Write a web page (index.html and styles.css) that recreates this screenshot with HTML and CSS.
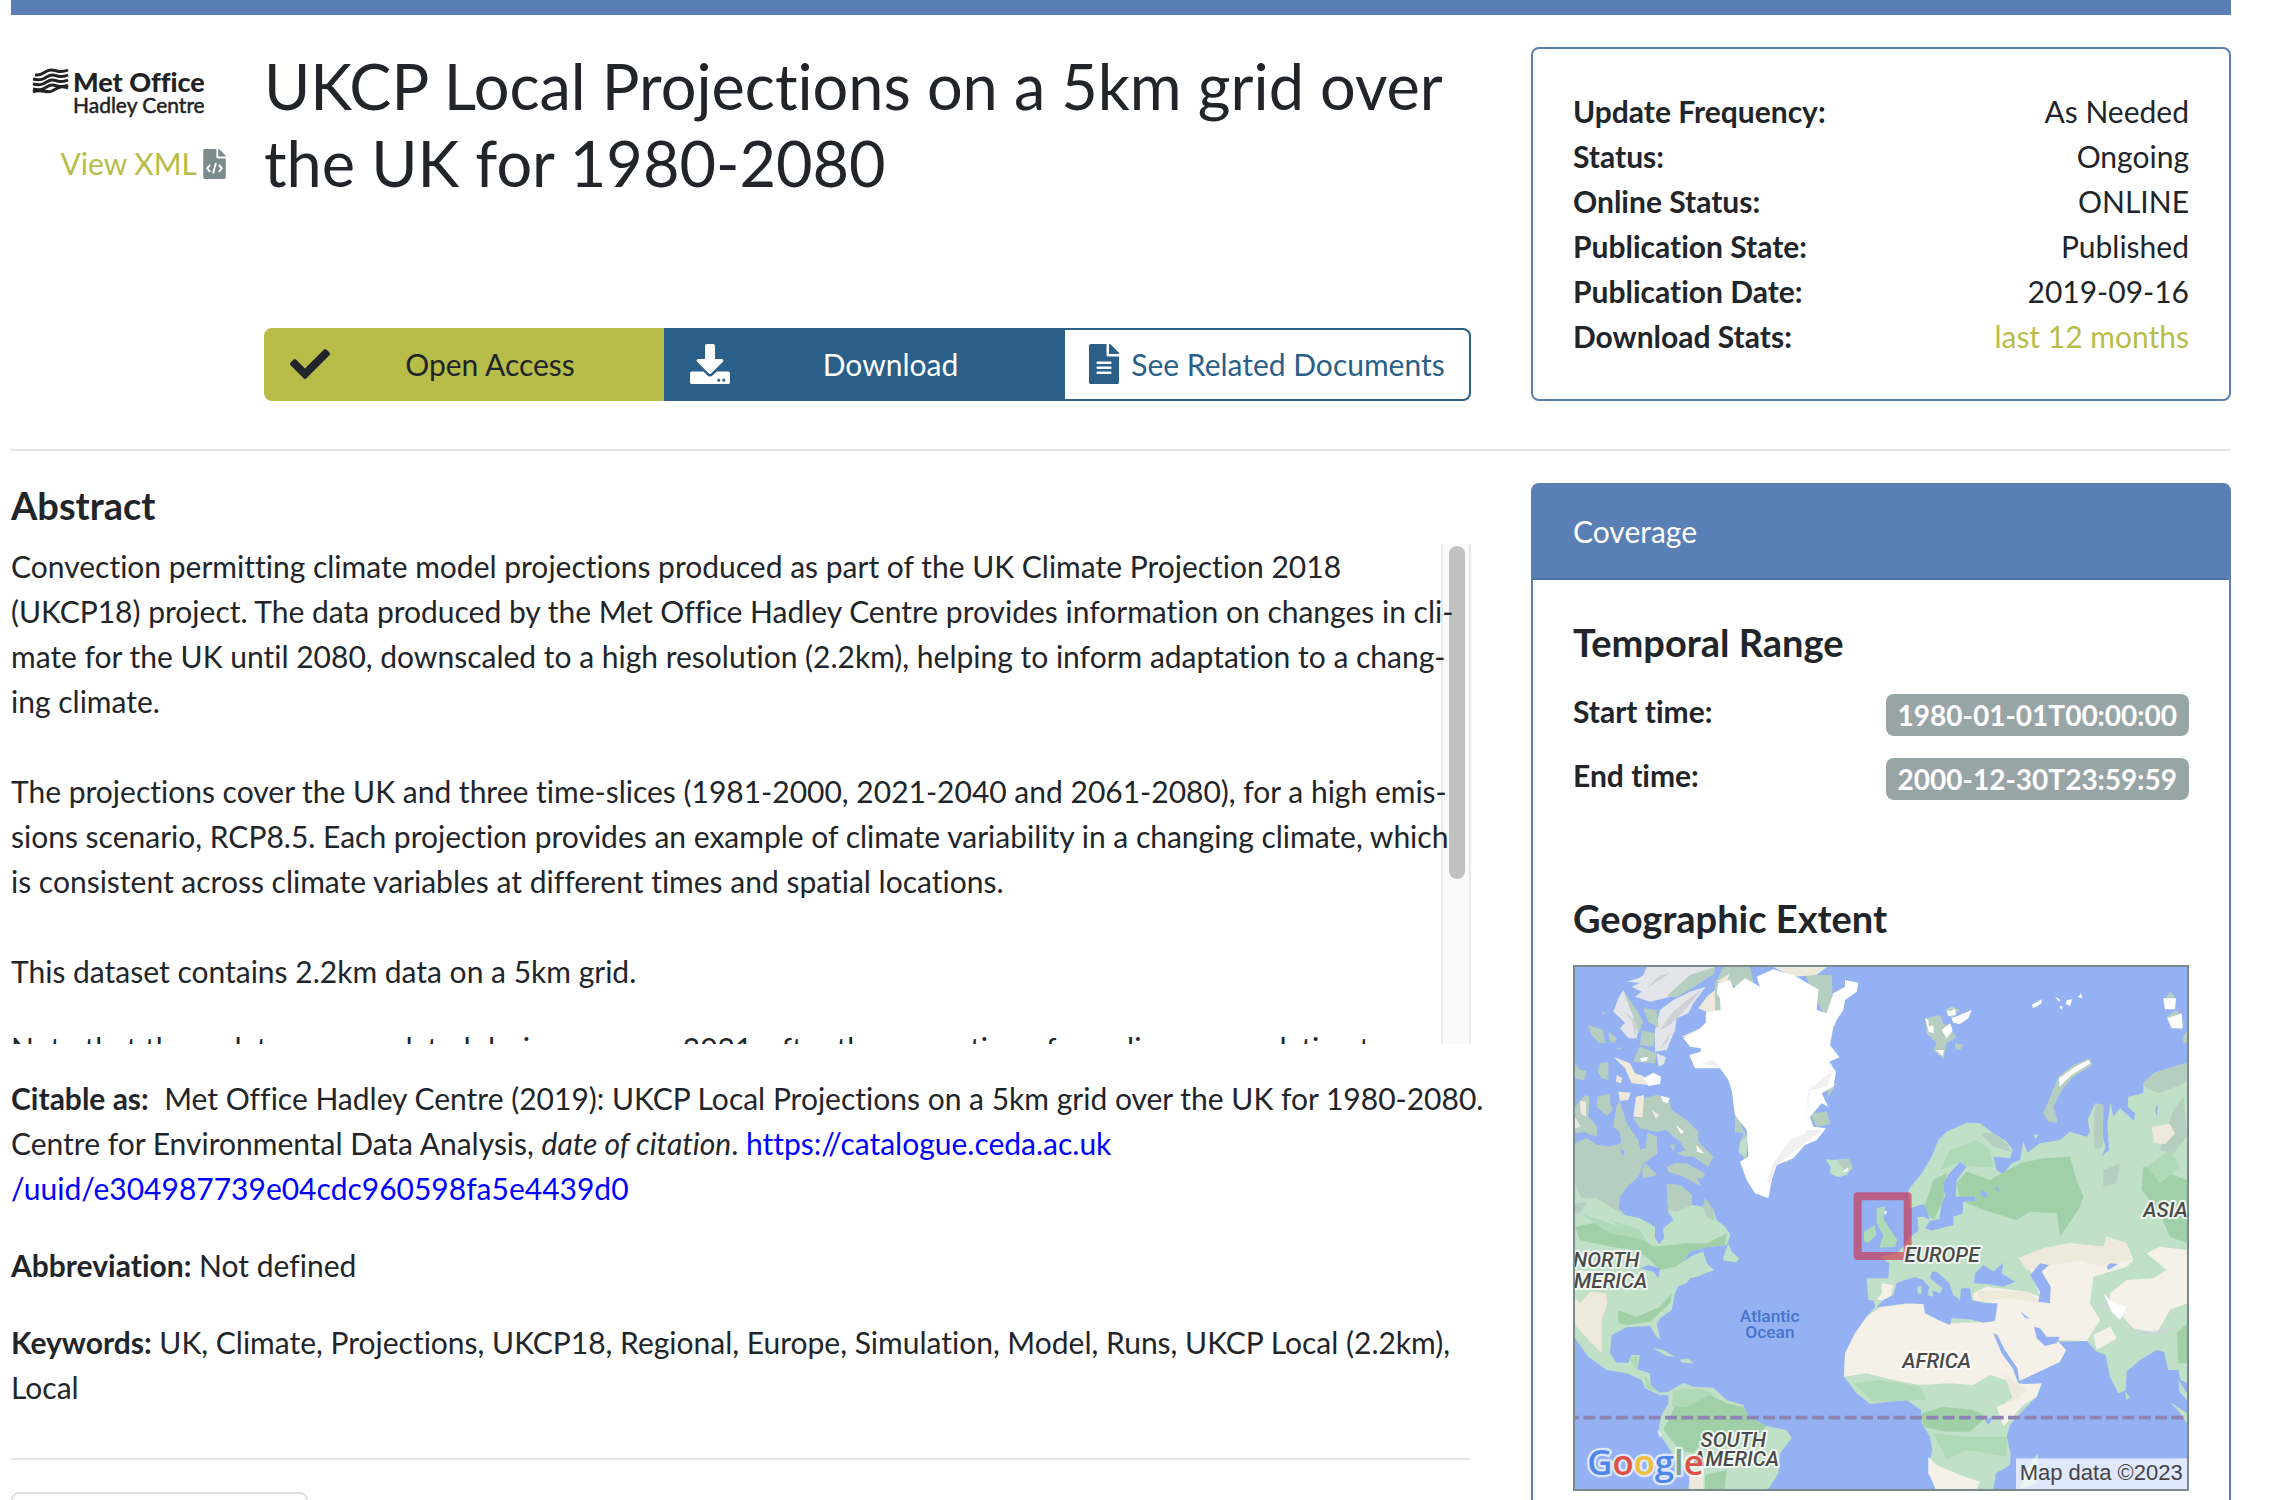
FILE: index.html
```html
<!DOCTYPE html>
<html lang="en-GB">
<head>
<meta charset="utf-8">
<title>UKCP Local Projections on a 5km grid over the UK for 1980-2080</title>
<link rel="stylesheet" href="styles.css">
</head>
<body>
<div class="page">
  <div class="banner"></div>

  <header class="row intro">
    <div class="record">
      <div class="source">
        <svg class="logo" viewBox="0 0 193 78" role="img" aria-label="Met Office Hadley Centre">
          <g fill="none" stroke="#222" stroke-width="3">
            <path d="M24 28c9 1 9-5 16-5s8 4 17 0"/>
            <path d="M22 32c12 3 13-4 19-4s8 4 16 0"/>
            <path d="M22 37c12 3 13-4 19-4s8 4 16 0"/>
            <path d="M22 42c12 3 13-4 19-4s8 4 16 0"/>
            <path d="M22 45c9-4 13 2 19-1s8-6 16-3"/>
          </g>
          <text class="logo-name" x="62" y="45">Met Office</text>
          <text class="logo-sub" x="62" y="66">Hadley Centre</text>
        </svg>
        <a class="xml" href="#xml">View XML
          <svg class="xml-icon" viewBox="0 0 384 512" aria-hidden="true">
            <path fill="#7b8a8b" d="M224 136V0H24C10.700 0 0 10.700 0 24v464c0 13.300 10.700 24 24 24h336c13.300 0 24-10.700 24-24V160H248c-13.200 0-24-10.800-24-24zM384 122v6H256V0h6c6 0 12 3 17 7l98 98c5 5 7 11 7 17z"/>
            <path fill="none" stroke="#fff" stroke-width="32" d="M118 270l-52 60 52 60M266 270l52 60-52 60M216 240l-48 180"/>
          </svg>
        </a>
      </div>
      <div class="heading">
        <h1>UKCP Local Projections on a 5km grid over the UK for 1980-2080</h1>
        <div class="actions">
          <a class="action open" href="#access">
            <svg class="icon" viewBox="0 0 512 512" aria-hidden="true"><path d="M173.898 439.404l-166.400-166.400c-9.997-9.997-9.997-26.206 0-36.204l36.203-36.204c9.997-9.998 26.207-9.998 36.204 0L192 312.690 432.095 72.596c9.997-9.997 26.207-9.997 36.204 0l36.203 36.204c9.997 9.997 9.997 26.206 0 36.204l-294.400 294.401c-9.998 9.997-26.207 9.997-36.204-.001z"/></svg>
            <span>Open Access</span>
          </a>
          <a class="action download" href="#download">
            <svg class="icon" viewBox="0 0 512 512" aria-hidden="true"><path d="M216 0h80c13.300 0 24 10.700 24 24v168h87.700c17.800 0 26.700 21.500 14.100 34.100L269.700 378.300c-7.500 7.500-19.800 7.500-27.300 0L90.100 226.100c-12.600-12.600-3.700-34.100 14.100-34.100H192V24c0-13.300 10.700-24 24-24zm296 376v112c0 13.300-10.700 24-24 24H24c-13.300 0-24-10.700-24-24V376c0-13.300 10.700-24 24-24h146.700l49 49c20.100 20.100 52.500 20.100 72.600 0l49-49H488c13.300 0 24 10.700 24 24zm-124 88c0-11-9-20-20-20s-20 9-20 20 9 20 20 20 20-9 20-20zm64 0c0-11-9-20-20-20s-20 9-20 20 9 20 20 20 20-9 20-20z"/></svg>
            <span>Download</span>
          </a>
          <a class="action related" href="#documents">
            <svg class="icon page-icon" viewBox="0 0 384 512" aria-hidden="true"><path d="M224 136V0H24C10.700 0 0 10.700 0 24v464c0 13.300 10.700 24 24 24h336c13.300 0 24-10.700 24-24V160H248c-13.200 0-24-10.800-24-24zm64 236c0 6.600-5.400 12-12 12H108c-6.600 0-12-5.400-12-12v-8c0-6.600 5.400-12 12-12h168c6.600 0 12 5.400 12 12v8zm0-64c0 6.600-5.400 12-12 12H108c-6.600 0-12-5.400-12-12v-8c0-6.600 5.400-12 12-12h168c6.600 0 12 5.400 12 12v8zm0-72v8c0 6.600-5.400 12-12 12H108c-6.600 0-12-5.400-12-12v-8c0-6.600 5.400-12 12-12h168c6.600 0 12 5.400 12 12zm96-114.100v6.100H256V0h6.100c6.400 0 12.500 2.500 17 7l97.900 98c4.500 4.500 7 10.600 7 16.900z"/></svg>
            <span>See Related Documents</span>
          </a>
        </div>
      </div>
    </div>

    <dl class="card facts">
      <div><dt>Update Frequency:</dt><dd>As Needed</dd></div>
      <div><dt>Status:</dt><dd>Ongoing</dd></div>
      <div><dt>Online Status:</dt><dd>ONLINE</dd></div>
      <div><dt>Publication State:</dt><dd>Published</dd></div>
      <div><dt>Publication Date:</dt><dd>2019-09-16</dd></div>
      <div><dt>Download Stats:</dt><dd><a href="#stats">last 12 months</a></dd></div>
    </dl>
  </header>

  <hr>

  <div class="row">
    <main>
      <h2>Abstract</h2>
      <div class="abstract">
        <div class="abstract-text">
          <p>Convection permitting climate model projections produced as part of the UK Climate Projection 2018<br>(UKCP18) project. The data produced by the Met Office Hadley Centre provides information on changes in cli-<br>mate for the UK until 2080, downscaled to a high resolution (2.2km), helping to inform adaptation to a chang-<br>ing climate.<br><br>The projections cover the UK and three time-slices (1981-2000, 2021-2040 and 2061-2080), for a high emis-<br>sions scenario, RCP8.5. Each projection provides an example of climate variability in a changing climate, which<br>is consistent across climate variables at different times and spatial locations.<br><br>This dataset contains 2.2km data on a 5km grid.</p>
          <p>Note that these data were updated during summer 2021, after the correction of a coding error relating to</p>
        </div>
        <div class="track"><div class="thumb"></div></div>
      </div>
      <p class="entry citation"><strong>Citable as:</strong> &nbsp;Met Office Hadley Centre (2019): UKCP Local Projections on a 5km grid over the UK for 1980-2080.<br>Centre for Environmental Data Analysis, <em>date of citation</em>. <a class="cite" href="#record">https://catalogue.ceda.ac.uk<br>/uuid/e304987739e04cdc960598fa5e4439d0</a></p>
      <p class="entry"><strong>Abbreviation:</strong> Not defined</p>
      <p class="entry"><strong>Keywords:</strong> UK, Climate, Projections, UKCP18, Regional, Europe, Simulation, Model, Runs, UKCP Local (2.2km), Local</p>
      <hr>
      <div class="tab"></div>
    </main>

    <aside class="card coverage">
      <div class="card-title">Coverage</div>
      <div class="card-body">
        <h2>Temporal Range</h2>
        <dl class="times">
          <div><dt>Start time:</dt><dd class="badge">1980-01-01T00:00:00</dd></div>
          <div><dt>End time:</dt><dd class="badge">2000-12-30T23:59:59</dd></div>
        </dl>
        <h2>Geographic Extent</h2>
        <svg class="map" viewBox="45 51 1836 1566" role="img" aria-label="Map of the geographic extent">
          <rect class="sea" x="45" y="51" width="1836" height="1566"/>
          <!-- Arctic Canada -->
          <path class="rock" d="M260 51H465L440 75 380 105 330 140 270 155 225 140 245 125 215 110 240 98 200 95 235 85 250 75ZM437 110L400 160 385 190 350 205 345 240 320 300 285 305 285 240 300 180 340 150 390 125ZM290 310L318 322 312 342 296 350ZM190 120L215 170 240 210 230 265 205 265 180 235 195 218 160 185 175 145Z"/>
          <path class="shade" d="M430 112L340 185 300 240 330 225 375 180ZM330 245L300 300 325 270ZM300 75L260 115 330 70ZM185 180L215 210 225 260 232 215Z"/>
          <path class="tundra" d="M465 51L390 75 320 138 350 142 400 112 462 72ZM190 122L230 180 250 215 235 250 220 200ZM250 175L290 180 296 235 265 215ZM245 240L285 250 282 290 240 285ZM238 290L290 310 285 340 220 335ZM83 225L130 240 135 280 118 280 95 255ZM145 245L170 265 165 280 150 275ZM120 340L145 335 145 390 125 385 113 365ZM45 340L60 360 80 362 72 390 45 385ZM168 295L187 292 180 300ZM125 188L135 186 132 197Z"/>
          <path class="tundra" d="M250 445L290 435 325 445 335 480 380 510 415 545 415 575 430 590 460 620 445 650 400 620 375 620 350 610 375 600 360 575 340 560 320 540 290 545 240 535 220 505 245 500ZM320 650L345 640 380 640 435 670 430 685 410 685 425 710 370 680 325 665ZM112 440L150 430 150 455 158 480 140 497 110 470ZM45 470L75 435 88 440 85 500 112 530 110 560 70 545 45 550ZM330 585L345 582 340 605ZM255 640L292 675 250 685 245 660Z"/>
          <path class="sand" d="M160 320L210 340 225 370 250 378 262 405 215 400 195 355ZM175 425L212 428 205 450 180 452ZM228 440L252 435 248 502 220 500ZM170 375L187 385 182 400 168 395ZM60 452L78 455 78 500 62 490ZM45 500L62 530 45 535ZM275 480L297 495 288 507Z"/>
          <path class="ice" d="M250 385L280 368 303 380 300 402 265 408ZM303 437L330 445 322 460 308 455ZM348 525L372 545 362 552ZM408 585L434 612 412 605ZM240 325L265 320 260 332 245 335Z"/>
          <!-- Greenland and Iceland -->
          <path class="tundra" d="M490 51H570L580 95 560 120 500 100 485 180 460 190 465 100ZM735 75L815 75 818 140 835 185 825 230 800 210 770 150ZM800 400L830 400 805 440ZM750 490L800 485 812 522 770 530ZM525 455L540 490 545 530 560 560 560 640 535 600 550 550 525 545ZM670 620L700 615 680 640Z"/>
          <path class="sand" d="M415 175L440 140 465 120 465 185 440 185ZM470 95L510 70 500 95ZM365 260L420 235 400 265ZM640 51H800L770 75 700 80Z"/>
          <path class="ice" d="M480 145L470 130 475 100 510 90 520 115 555 85 600 110 590 80 640 58 700 75 735 95 775 118 770 180 800 190 820 130 855 110 855 90 895 98 890 125 855 150 850 180 830 210 820 230 810 285 838 322 808 335 828 365 820 410 785 430 805 470 785 460 750 500 760 530 798 535 770 570 735 585 700 625 650 645 635 690 625 745 585 730 560 690 540 635 565 620 560 540 525 495 515 420 505 390 480 355 405 355 388 315 422 305 422 295 390 290 370 265 415 240 437 218 438 185 482 180Z"/>
          <path class="snow" d="M820 360L800 410 750 420 735 540 790 540 720 590 650 645 630 700 620 690 640 640 690 570 735 550 745 420ZM425 340L460 330 485 355Z"/>
          <path class="light" d="M797 628L825 630 865 626 878 650 860 675 835 682 810 670 812 650ZM540 575L560 560 560 620 537 610Z"/>
          <path class="tundra" d="M830 630L865 626 878 650 850 660Z"/>
          <path class="ice" d="M845 665L865 652 862 665Z"/>
          <!-- The Americas -->
          <path class="light" d="M45 580L80 565 110 585 150 590 185 580 180 545 160 530 170 470 178 452 200 520 210 550 215 560 235 570 240 600 258 595 262 548 290 560 292 610 250 640 235 680 200 710 180 740 175 775 195 795 240 805 285 830 285 865 298 882 312 865 310 835 340 810 325 785 320 703 360 705 395 735 395 765 430 770 435 745 460 780 470 810 495 830 512 855 500 885 440 892 390 905 370 935 400 915 430 905 440 940 462 960 410 980 390 985 380 1000 355 1008 345 1030 335 1080 300 1105 290 1125 302 1170 290 1160 270 1128 200 1132 155 1155 150 1210 170 1238 205 1238 215 1215 240 1215 232 1258 270 1270 272 1305 300 1328 325 1325 370 1298 400 1310 460 1313 500 1350 550 1365 565 1400 620 1428 680 1440 695 1465 660 1510 655 1570 630 1610 620 1617H385L390 1570 340 1515 295 1445 302 1400 325 1360 325 1335 300 1335 255 1315 245 1290 200 1270 140 1260 85 1220 45 1165Z"/>
          <path class="tundra" d="M45 580L80 565 110 585 150 590 185 580 180 545 160 530 170 470 178 452 200 520 235 570 240 600 258 595 262 548 290 560 292 610 250 640 235 680 200 710 180 740 175 775 190 792 150 770 110 745 65 745 45 700ZM320 703L360 705 395 735 395 765 350 785 325 780ZM435 745L460 780 462 812 440 800 430 770ZM45 760L80 755 60 790 45 790Z"/>
          <path class="forest" d="M45 830L120 815 150 850 200 840 250 870 280 890 380 880 440 880 500 850 495 885 440 892 390 905 370 935 345 950 300 960 270 930 230 900 150 890 60 870ZM175 1080L200 1090 230 1100 300 1070 335 1030 330 1060 270 1115 200 1125 175 1120ZM330 1400L350 1360 440 1330 500 1360 550 1370 565 1400 620 1428 600 1450 560 1440 440 1460 400 1510 360 1500 310 1440ZM435 1575L500 1560 495 1617H435Z"/>
          <path class="mid" d="M60 790L180 830 150 810 240 840 260 870 150 850ZM340 1320L420 1315 460 1330 380 1370 335 1370ZM205 1225L235 1218 230 1255ZM255 1275L272 1305 300 1330 258 1312Z"/>
          <path class="sand" d="M45 1040L60 1060 90 1025 138 1030 142 1060 125 1110 125 1210 95 1180 45 1125ZM50 960L100 965 95 985 60 980ZM388 1570L432 1560 430 1617H388ZM292 1440L305 1450 300 1465Z"/>
          <path class="sea" d="M240 955L265 945 300 955 295 985 280 965ZM180 595L195 605 188 620Z"/>
          <path class="light" d="M490 920L505 880 515 905 537 925 530 937 490 932ZM278 1194L310 1200 348 1222 320 1218ZM360 1228L385 1226 402 1240 365 1238Z"/>
          <!-- Europe, Asia and Africa -->
          <path class="light" d="M1045 720L1085 670 1115 620 1135 570 1160 545 1220 518 1260 520 1300 550 1340 575 1358 600 1350 625 1300 620 1310 660 1330 672 1355 640 1380 630 1390 575 1402 608 1440 580 1500 570 1530 545 1580 560 1590 545 1583 510 1605 460 1630 465 1628 560 1637 590 1625 620 1647 600 1642 520 1652 458 1660 500 1680 475 1722 512 1725 490 1703 470 1705 440 1750 430 1750 400 1780 370 1840 350 1881 340V1300L1862 1290 1855 1260 1825 1260 1812 1205 1790 1200 1740 1230 1700 1265 1697 1320 1675 1330 1650 1280 1637 1215 1610 1205 1580 1173 1500 1175 1490 1170 1518 1200 1500 1235 1380 1292 1376 1300 1445 1300 1430 1340 1390 1380 1350 1425 1340 1460 1352 1510 1350 1545 1308 1570 1300 1617H1125L1105 1550 1117 1500 1110 1460 1085 1420 1083 1380 1040 1350 990 1355 930 1362 890 1330 852 1280 855 1210 885 1150 920 1100 945 1072 942 1052 925 1050 920 985 985 985 988 940 960 920 1010 910 1030 890 1050 860 1075 842 1073 800 1092 798 1090 770 1050 775Z"/>
          <path class="tundra" d="M1750 400L1780 370 1840 350 1881 340V395L1800 430 1760 415ZM1605 460L1630 465 1628 590 1605 600 1600 540ZM1630 660L1680 640 1670 700 1630 710ZM1840 480L1870 440 1881 560 1840 610 1800 600ZM1260 550L1300 550 1345 585 1350 605 1300 590Z"/>
          <path class="forest" d="M1380 640L1450 625 1530 620 1550 690 1570 740 1560 770 1500 860 1490 790 1410 785 1370 810 1270 780 1200 750 1190 700 1220 665 1290 690ZM1750 650L1800 660 1881 690V880L1830 860 1800 790 1745 720ZM1120 690L1160 670 1150 750 1120 810 1090 780ZM1085 1390L1150 1370 1240 1380 1280 1400 1230 1445 1160 1445 1090 1430ZM1850 1150L1881 1120V1240H1855Z"/>
          <path class="mid" d="M1170 600L1250 570 1290 600 1300 650 1240 650 1190 640 1140 660ZM880 1300L960 1290 1080 1310 1100 1350 940 1355ZM1120 1450L1220 1460 1340 1460 1340 1520 1220 1500 1160 1530ZM1760 650L1830 600 1860 650 1800 700Z"/>
          <path class="desert" d="M920 1100L960 1072 1060 1060 1092 1062 1100 1090 1170 1120 1300 1115 1305 1060 1240 1050 1240 1030 1280 1010 1400 1025 1440 1040 1410 960 1375 925 1450 895 1530 880 1630 890 1640 860 1700 880 1720 930 1700 950 1600 980 1590 1060 1620 1110 1580 1173 1490 1170 1518 1200 1500 1235 1380 1292 1376 1300 1445 1300 1430 1340 1390 1365 1330 1430 1310 1370 1360 1350 1340 1290 1290 1275 1240 1305 1170 1300 1080 1305 1000 1290 920 1270 852 1280 855 1210 885 1150ZM1650 1030L1700 990 1780 985 1820 960 1760 910 1800 890 1881 900V1060L1830 1080 1790 1150 1720 1135 1650 1060ZM965 1000L1000 1005 990 1050 950 1050 965 1030ZM1600 1155L1650 1130 1670 1165 1610 1200ZM1105 1520L1130 1545 1200 1575 1260 1595 1250 1617H1128L1105 1570Z"/>
          <path class="sand" d="M1375 925L1450 895 1530 880 1630 890 1640 860 1700 880 1715 930 1620 950 1560 930 1400 960ZM1250 1020L1400 1025 1450 1060 1350 1045 1260 1055ZM1775 530L1830 522 1845 550 1815 583 1782 578ZM1330 1270L1400 1320 1380 1340 1320 1370 1360 1340Z"/>
          <path class="sea" d="M1200 635L1220 650 1190 690 1187 740 1245 740 1245 752 1210 755 1208 790 1180 800 1180 825 1115 842 1095 835 1110 812 1138 808 1145 760 1155 740 1150 700 1165 675ZM1050 775L1092 762 1110 810 1092 800 1073 800ZM1262 720L1282 730 1278 745 1262 735ZM1305 705L1318 720 1308 722Z"/>
          <path class="sea" d="M950 1072L970 1050 1000 1035 1010 1000 1035 990 1065 982 1090 990 1115 1020 1140 1030 1148 1015 1110 985 1115 965 1130 965 1168 1000 1180 1035 1200 1050 1203 1015 1230 1015 1235 1050 1275 1060 1313 1060 1305 1112 1270 1118 1230 1108 1175 1105 1170 1125 1135 1110 1095 1090 1090 1062 1040 1060ZM1242 1000L1245 970 1270 945 1300 965 1330 938 1325 970 1365 995 1330 1010 1290 1003ZM1410 975L1440 940 1467 945 1445 965 1472 1010 1470 1060 1435 1055 1440 1025ZM1300 1150L1312 1155 1335 1200 1372 1255 1378 1292 1440 1275 1460 1298 1400 1302 1375 1300 1358 1255 1325 1210ZM1422 1130L1440 1135 1460 1160 1500 1160 1490 1180 1455 1188 1430 1165ZM1380 1083L1410 1108 1395 1103ZM1640 950L1650 940 1675 942 1645 960ZM1275 1410L1300 1400 1285 1425ZM1785 480L1795 460 1790 500Z"/>
          <path class="light" d="M1105 1018L1115 1010 1120 1040 1105 1036ZM1072 1010L1085 1008 1083 1032 1073 1030ZM1425 1520L1435 1510 1430 1600 1380 1617 1400 1560ZM1695 1325L1710 1340 1700 1350ZM1830 1355L1881 1390V1420L1860 1390ZM1855 1290L1881 1330V1350L1858 1325ZM1420 555L1435 552 1428 568Z"/>
          <path class="mid" d="M950 775L975 768 970 805 985 830 1012 870 1005 890 958 893 970 855 950 820ZM912 845L945 825 948 855 925 880 912 872Z"/>
          <path class="shade" fill-opacity=".6" d="M1610 1060L1640 1065 1660 1085 1630 1080ZM1690 1120L1740 1145 1800 1140 1845 1130 1800 1152 1740 1152Z"/>
          <path class="ice" d="M1630 1030L1660 1060 1700 1070 1680 1110 1655 1085ZM972 782L982 785 975 795Z"/>
          <!-- Arctic islands -->
          <path class="tundra" d="M1097 205L1140 195 1150 220 1190 260 1160 280 1150 328 1120 300 1130 280 1100 250ZM1155 180L1175 168 1200 180 1175 205ZM1185 280L1210 285 1200 300 1185 298ZM1590 325L1597 345 1540 380 1505 420 1480 470 1495 520 1465 515 1450 490 1475 430 1495 380 1540 345ZM1815 150L1830 123 1850 150ZM1820 200L1850 180 1870 215 1865 240 1835 230ZM1870 260L1881 240V280H1870Z"/>
          <path class="ice" d="M1175 205L1235 180 1225 205 1200 222 1180 218ZM1160 185L1185 178 1188 195 1165 198ZM1145 240L1170 220 1178 242 1160 265ZM1105 230L1120 225 1122 250 1105 245ZM1128 300L1152 300 1148 318ZM1585 330L1592 340 1535 375 1498 410 1497 385 1545 350ZM1810 145L1848 145 1845 178 1815 178ZM1822 205L1865 190 1868 235 1835 235ZM1415 165L1445 148 1445 160 1420 175ZM1485 140L1500 148 1498 157ZM1520 150L1537 148 1530 168 1518 163ZM1553 142L1563 130 1567 145ZM1498 170L1508 168 1505 180ZM1095 205L1105 210 1108 250Z"/>
          <line class="equator" x1="21" y1="1403" x2="1881" y2="1403"/>
          <rect class="extent" x="893" y="739" width="150" height="179"/>
          <g class="place">
            <text x="238" y="950" text-anchor="end">NORTH</text>
            <text x="262" y="1015" text-anchor="end">MERICA</text>
            <text x="520" y="1492" text-anchor="middle">SOUTH</text>
            <text x="527" y="1547" text-anchor="middle">AMERICA</text>
            <text x="1146" y="936" text-anchor="middle">EUROPE</text>
            <text x="1130" y="1254" text-anchor="middle">AFRICA</text>
            <text x="1750" y="800">ASIA</text>
          </g>
          <g class="ocean">
            <text x="629" y="1116" text-anchor="middle">Atlantic</text>
            <text x="630" y="1165" text-anchor="middle">Ocean</text>
          </g>
          <text class="brand" x="82" y="1574"><tspan fill="#4f86ec">G</tspan><tspan fill="#dd5144">o</tspan><tspan fill="#efbe3a">o</tspan><tspan fill="#4f86ec">g</tspan><tspan fill="#7fa58c">l</tspan><tspan fill="#dd5144">e</tspan></text>
          <rect x="1368" y="1525" width="513" height="92" fill="#fff" fill-opacity=".7"/>
          <text class="credit" x="1868" y="1590" text-anchor="end">Map data ©2023</text>
        </svg>
      </div>
    </aside>
  </div>
</div>
</body>
</html>
```
FILE: styles.css
```css
* { box-sizing: border-box; }

body {
  margin: 0;
  height: 100vh;
  overflow: hidden;
  background: #fff;
  color: #212529;
  font: 30px/45px Lato, "Liberation Sans", sans-serif;
  font-variant-ligatures: none;
}

h1, h2, p, dl, dd { margin: 0; }
a { color: #b8bd49; text-decoration: none; }
dt, strong { font-weight: 700; }

.page { padding: 0 61px 0 11px; }
.banner { height: 15px; background: #5a7fb6; }

.row {
  display: grid;
  grid-template-columns: minmax(0, 73fr) minmax(0, 35fr);
  gap: 60px;
}
.intro { padding-top: 32px; }

hr {
  height: 2px;
  margin: 48px 0 32px;
  border: 0;
  background: #e5e5e5;
}

/* Title block */
.record {
  display: grid;
  grid-template-columns: 215px minmax(0, 1fr);
  gap: 38px;
}
.source { display: flex; flex-direction: column; gap: 16px; }
.logo { display: block; width: 193px; height: 78px; }
.logo-name { font-size: 27px; font-weight: 900; fill: #222; }
.logo-sub { font-size: 21px; fill: #222; stroke: #222; stroke-width: 0.5px; }
.xml { display: flex; justify-content: flex-end; align-items: center; gap: 6px; }
.xml-icon { width: 23px; height: 30px; }

.heading { display: flex; flex-direction: column; justify-content: space-between; }
h1 { font-size: 63px; line-height: 77px; font-weight: 400; }

.actions { display: grid; grid-template-columns: 400fr 401fr 406fr; }
.action {
  display: flex;
  align-items: center;
  gap: 12px;
  padding: 12px 24px;
  border: 2px solid #295f88;
}
.action span { flex: 1; text-align: center; white-space: nowrap; }
.icon { width: 40px; height: 40px; margin: 2px 0 3px; fill: currentColor; }
.page-icon { width: 30px; }
.open { background: #b8bd49; border-color: #b8bd49; color: #212529; border-radius: 8px 0 0 8px; }
.download { background: #295f88; color: #fff; }
.related { color: #295f88; border-left: 0; border-radius: 0 8px 8px 0; }

/* Cards */
.card { border: 2px solid #5a7fb6; border-radius: 8px; }
.facts { padding: 40px; }
.facts div, .times div { display: flex; justify-content: space-between; }
.card-title {
  padding: 24px 40px;
  background: #5a7fb6;
  border-bottom: 2px solid #5173a5;
  color: #fff;
}
.card-body { padding: 40px 40px 80px; }
h2 { font-size: 38px; line-height: 45px; font-weight: 700; margin-bottom: 16px; }
.card-body h2 { margin-bottom: 24px; }
.times { display: flex; flex-direction: column; gap: 17px; margin-bottom: 96px; }
.badge {
  margin-top: 5px;
  padding: 6px 12px;
  border-radius: 8px;
  background: #98a5a6;
  color: #fff;
  font-size: 28px;
  font-weight: 700;
  line-height: 30px;
}

/* Abstract */
.abstract { display: flex; height: 500px; overflow: hidden; }
.abstract-text { flex: 1; min-width: 0; z-index: 1; white-space: nowrap; }
.abstract-text p { margin-bottom: 32px; }
.track {
  width: 30px;
  padding: 2px 4px 2px 6px;
  border: solid #e8e8e8;
  border-width: 0 2px;
  background: #fafafa;
}
.thumb { height: 333px; border-radius: 8px; background: #c1c1c1; }
.entry { margin-top: 32px; }
.citation { white-space: nowrap; }
.cite { color: #00f; }
.tab { width: 297px; height: 84px; border: 2px solid #dee2e6; border-radius: 8px 8px 0 0; }

/* Map */
.map { display: block; width: 100%; border: 2px solid #7b8a8b; }
.sea { fill: #94b2f3; }
.light { fill: #c1e0c8; }
.mid { fill: #b0d9b8; }
.forest { fill: #9fd0a8; }
.tundra { fill: #b6cebf; }
.sand { fill: #efe9dc; }
.desert { fill: #f5f1e9; }
.rock { fill: #e4e5ea; }
.shade { fill: #cfd1d6; }
.snow { fill: #f0f0f0; }
.ice { fill: #fff; }
.equator { stroke: #8e84b4; stroke-width: 11; stroke-dasharray: 36 13; }
.extent { fill: none; stroke: #d02840; stroke-opacity: 0.6; stroke-width: 24; stroke-linejoin: round; }
.place { font: italic 500 62px Roboto, sans-serif; fill: #4a4a4a; stroke: #fff; stroke-opacity: 0.8; stroke-width: 12; stroke-linejoin: round; paint-order: stroke; }
.ocean { font: 500 52px Roboto, sans-serif; fill: #4674cc; }
.brand { font: 600 104px "Open Sans", sans-serif; stroke: #fff; stroke-opacity: 0.7; stroke-width: 14; stroke-linejoin: round; paint-order: stroke; }
.credit { font: 66px "Liberation Sans", sans-serif; fill: #444; }
```
